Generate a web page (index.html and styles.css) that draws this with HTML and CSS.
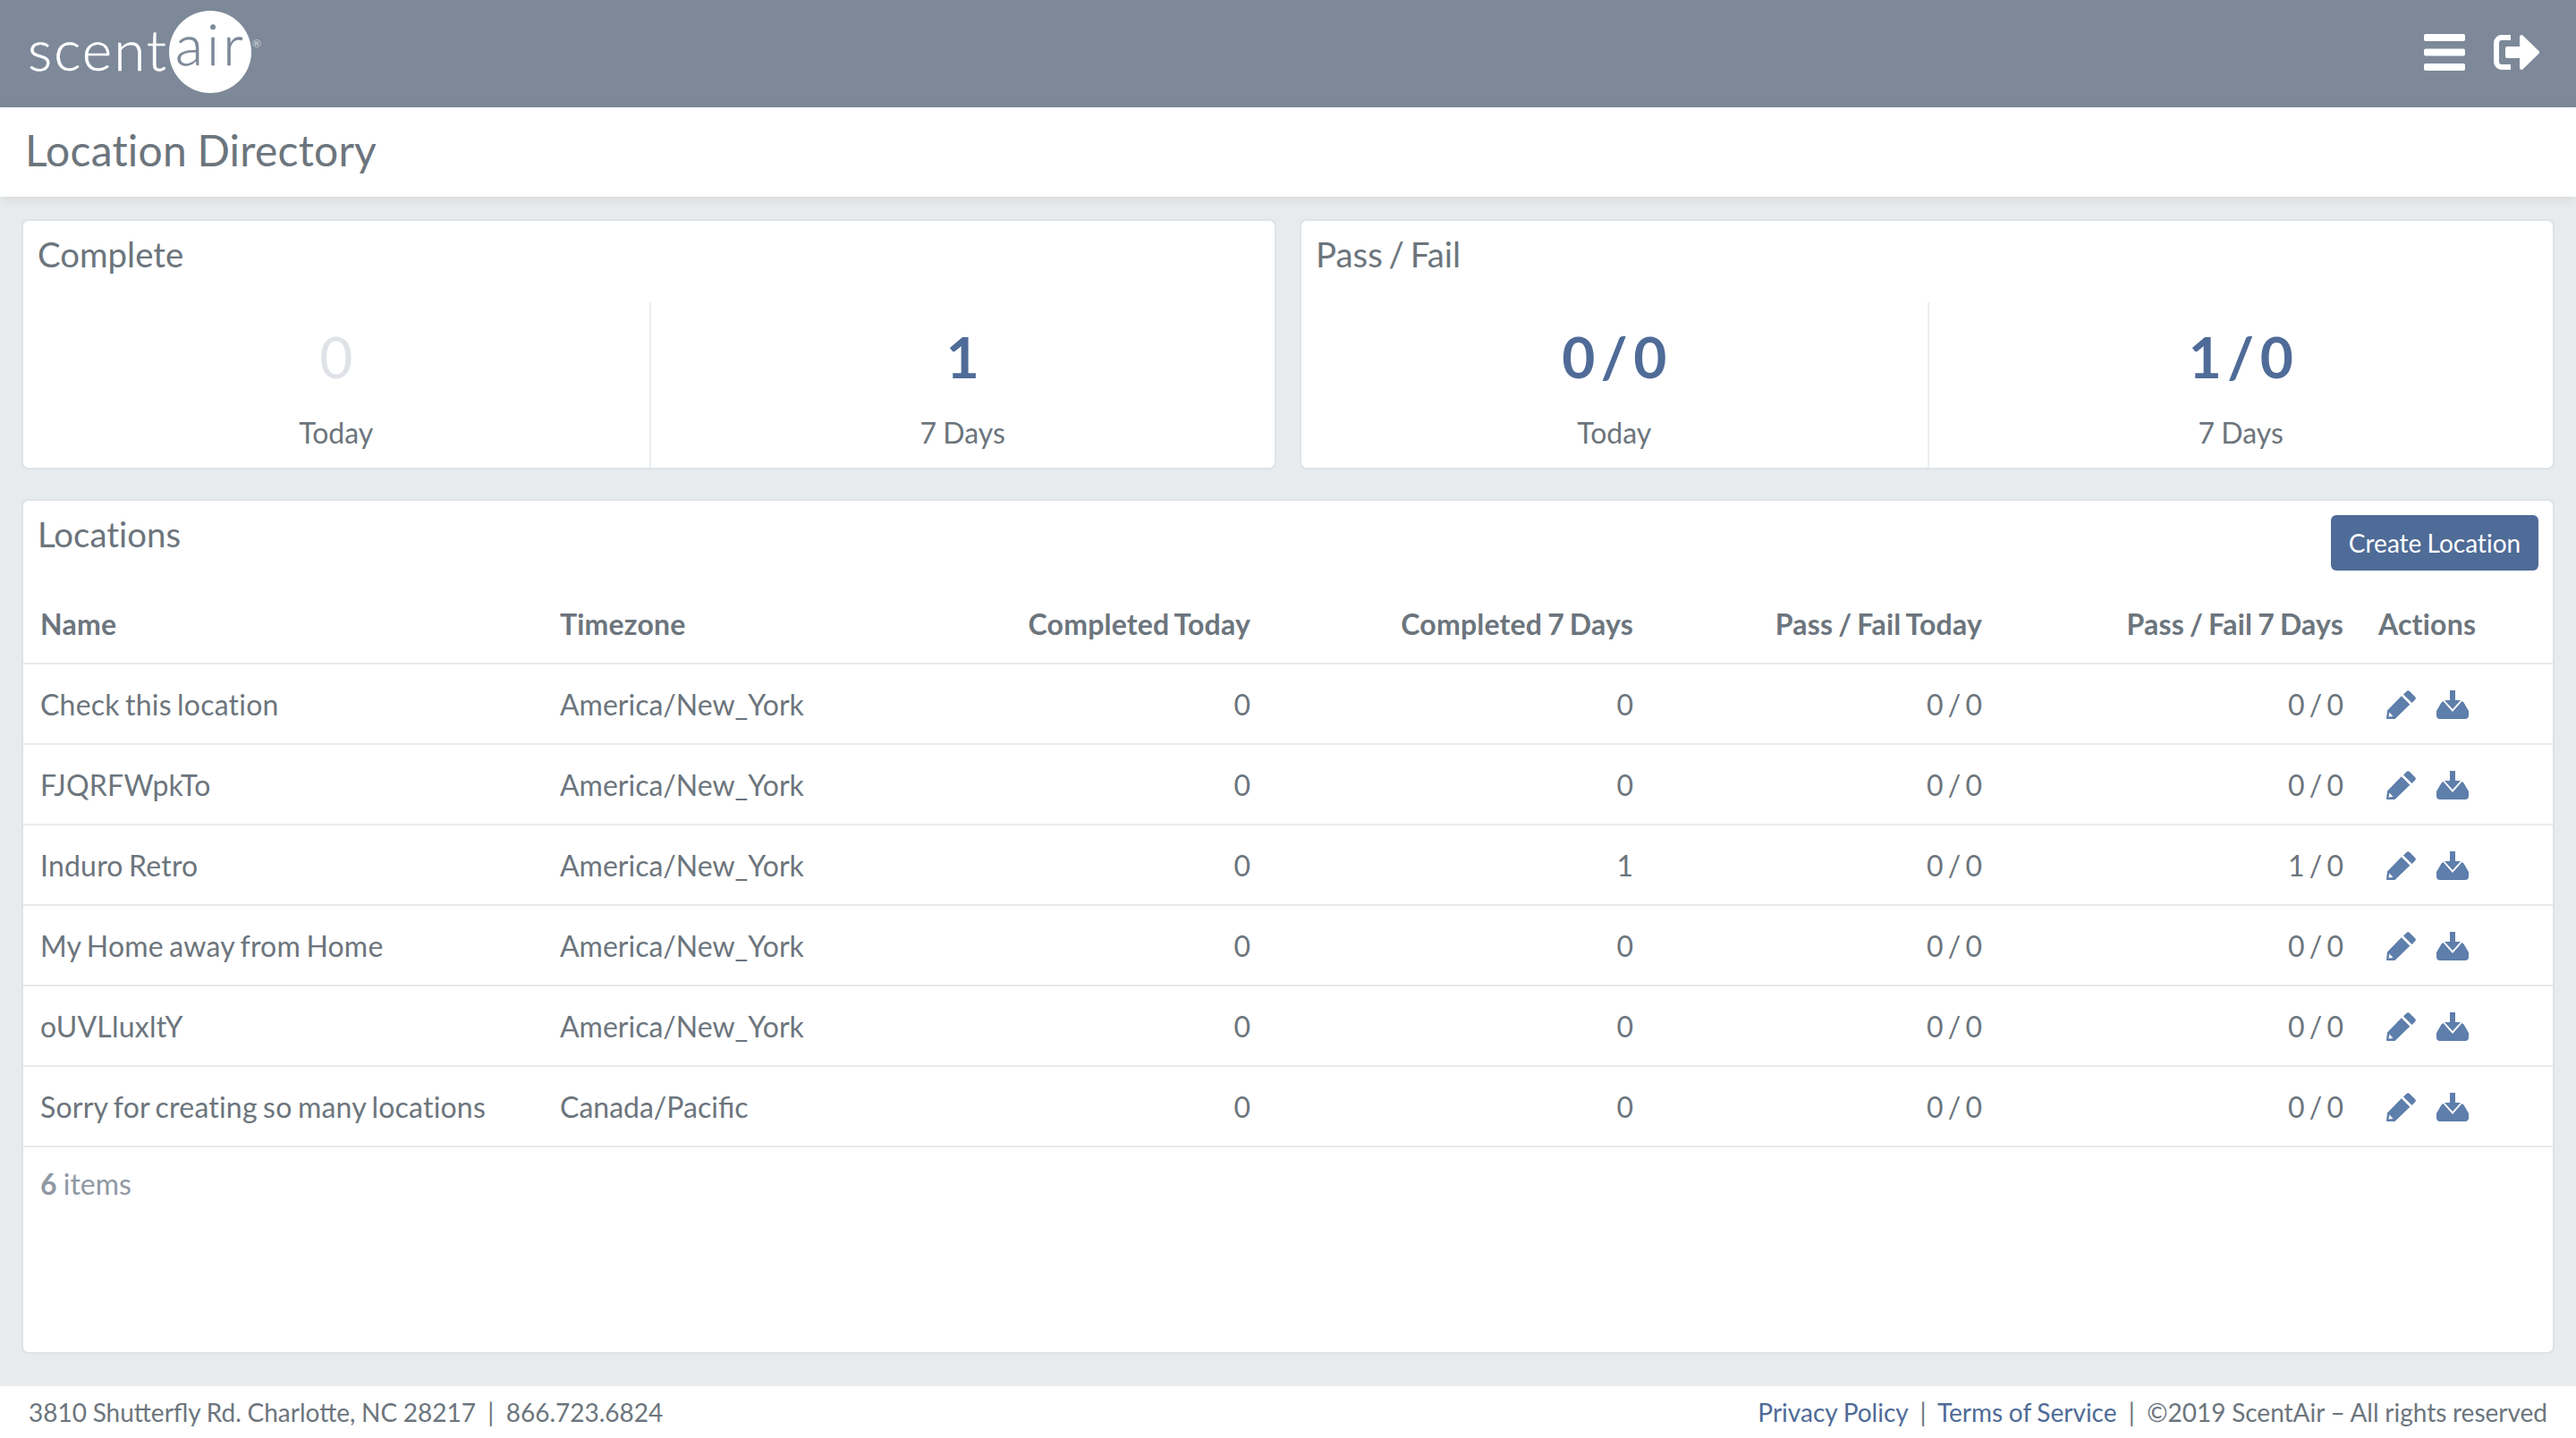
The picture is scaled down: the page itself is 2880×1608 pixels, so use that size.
FILE: index.html
```html
<!DOCTYPE html>
<html lang="en">
<head>
<meta charset="utf-8">
<title>Location Directory</title>
<link rel="stylesheet" href="styles.css">
</head>
<body>
<header class="topbar">
  <div class="logo">
    <span class="logo-scent">scent</span>
    <span class="logo-disc"><span class="logo-air">air</span></span>
    <span class="logo-reg">®</span>
  </div>
  <div class="top-icons">
    <svg class="ico-menu" viewBox="0 0 46 41"><rect x="0" y="0" width="46" height="8" rx="2"/><rect x="0" y="16.500" width="46" height="8" rx="2"/><rect x="0" y="33" width="46" height="8" rx="2"/></svg>
    <svg class="ico-exit" viewBox="0 0 51 39"><path d="M19 0v6H9a3 3 0 0 0-3 3v21a3 3 0 0 0 3 3h10v6H9a9 9 0 0 1-9-9V9a9 9 0 0 1 9-9z"/><path d="M29 2a2 2 0 0 1 3.400-1.400L50.400 18a2 2 0 0 1 0 3L32.400 38.400a2 2 0 0 1-3.400-1.400V26H15a2 2 0 0 1-2-2v-9a2 2 0 0 1 2-2h14z"/></svg>
  </div>
</header>
<div class="titlebar"><h1>Location Directory</h1></div>
<main class="content">
  <div class="stats">
    <section class="card stat-card">
      <h2>Complete</h2>
      <div class="stat-row">
        <div class="stat"><div class="num num-zero">0</div><div class="lbl">Today</div></div>
        <div class="stat"><div class="num">1</div><div class="lbl">7 Days</div></div>
      </div>
    </section>
    <section class="card stat-card">
      <h2>Pass / Fail</h2>
      <div class="stat-row">
        <div class="stat"><div class="num">0 / 0</div><div class="lbl">Today</div></div>
        <div class="stat"><div class="num">1 / 0</div><div class="lbl">7 Days</div></div>
      </div>
    </section>
  </div>
  <section class="card locations">
    <div class="loc-head">
      <h2>Locations</h2>
      <a class="btn">Create Location</a>
    </div>
    <table>
      <colgroup><col class="c1"><col class="c2"><col class="c3"><col class="c4"><col class="c5"><col class="c6"><col class="c7"></colgroup>
      <thead>
        <tr><th>Name</th><th>Timezone</th><th class="r">Completed Today</th><th class="r">Completed 7 Days</th><th class="r">Pass / Fail Today</th><th class="r">Pass / Fail 7 Days</th><th>Actions</th></tr>
      </thead>
      <tbody>
        <tr><td>Check this location</td><td>America/New_York</td><td class="r">0</td><td class="r">0</td><td class="r">0 / 0</td><td class="r">0 / 0</td><td class="acts"><svg class="i-edit" viewBox="0 0 33 32"><use href="#pen"/></svg><svg class="i-down" viewBox="0 0 36 32"><use href="#tray"/></svg></td></tr>
        <tr><td>FJQRFWpkTo</td><td>America/New_York</td><td class="r">0</td><td class="r">0</td><td class="r">0 / 0</td><td class="r">0 / 0</td><td class="acts"><svg class="i-edit" viewBox="0 0 33 32"><use href="#pen"/></svg><svg class="i-down" viewBox="0 0 36 32"><use href="#tray"/></svg></td></tr>
        <tr><td>Induro Retro</td><td>America/New_York</td><td class="r">0</td><td class="r">1</td><td class="r">0 / 0</td><td class="r">1 / 0</td><td class="acts"><svg class="i-edit" viewBox="0 0 33 32"><use href="#pen"/></svg><svg class="i-down" viewBox="0 0 36 32"><use href="#tray"/></svg></td></tr>
        <tr><td>My Home away from Home</td><td>America/New_York</td><td class="r">0</td><td class="r">0</td><td class="r">0 / 0</td><td class="r">0 / 0</td><td class="acts"><svg class="i-edit" viewBox="0 0 33 32"><use href="#pen"/></svg><svg class="i-down" viewBox="0 0 36 32"><use href="#tray"/></svg></td></tr>
        <tr><td>oUVLluxltY</td><td>America/New_York</td><td class="r">0</td><td class="r">0</td><td class="r">0 / 0</td><td class="r">0 / 0</td><td class="acts"><svg class="i-edit" viewBox="0 0 33 32"><use href="#pen"/></svg><svg class="i-down" viewBox="0 0 36 32"><use href="#tray"/></svg></td></tr>
        <tr><td>Sorry for creating so many locations</td><td class="lig">Canada/Pacific</td><td class="r">0</td><td class="r">0</td><td class="r">0 / 0</td><td class="r">0 / 0</td><td class="acts"><svg class="i-edit" viewBox="0 0 33 32"><use href="#pen"/></svg><svg class="i-down" viewBox="0 0 36 32"><use href="#tray"/></svg></td></tr>
      </tbody>
    </table>
    <div class="count"><b>6</b> items</div>
  </section>
</main>
<footer class="foot">
  <div class="lig">3810 Shutterfly Rd. Charlotte, NC 28217 &nbsp;|&nbsp; 866.723.6824</div>
  <div><a>Privacy Policy</a> &nbsp;|&nbsp; <a>Terms of Service</a> &nbsp;|&nbsp; ©2019 ScentAir – All rights reserved</div>
</footer>
<svg class="defs" aria-hidden="true">
  <defs>
    <path id="pen" fill-rule="evenodd" d="M22.500 1a2.500 2.500 0 0 1 3.500 0l6 6a2.500 2.500 0 0 1 0 3.500l-3.500 3.500-9.500-9.500zM16.800 6.200l9.500 9.500L9 32.500.9 32A1 1 0 0 1 0 31l1-8.500zM3.500 24.500l-1 5 5-.6z"/>
    <path id="tray" d="M15 0h6v11h6l-9 10-9-10h6zM7.500 12 18 24 28.500 12l2 1.500L36 23v5a4 4 0 0 1-4 4H4a4 4 0 0 1-4-4v-5l5.500-9.500z"/>
  </defs>
</svg>
</body>
</html>
```
FILE: styles.css
```css
* { box-sizing: border-box; }
html, body { margin: 0; height: 100%; }
body {
  width: 2880px; height: 1608px; background: #e8ebee; color: #6c757d;
  font-family: Lato, "Liberation Sans", sans-serif; font-size: 32px; word-spacing: -1px;
  font-variant-ligatures: none;
  display: flex; flex-direction: column; overflow: hidden;
}
.lig { font-variant-ligatures: common-ligatures; }
.defs { width: 0; height: 0; position: absolute; }
.topbar {
  height: 120px; background: #7d8999; flex: none;
  display: flex; justify-content: space-between; align-items: center;
  padding: 0 41px 3px 31px; color: #fff;
}
.logo { align-self: flex-start; height: 120px; position: relative; width: 270px; }
.logo-scent { position: absolute; left: 0; top: 23px; font: 300 64px/64px Lato, sans-serif; letter-spacing: 2px; -webkit-text-stroke: .5px #fff; }
.logo-disc {
  position: absolute; left: 158px; top: 12px; width: 92px; height: 92px; border-radius: 50%;
  background: #fff; color: #7d8999; display: flex; justify-content: center;
}
.logo-air { font: 300 64px/74px Lato, sans-serif; letter-spacing: 4px; margin-left: 2px; -webkit-text-stroke: .5px #7d8999; }
.logo-reg { position: absolute; left: 251px; top: 41px; font-size: 12px; line-height: 16px; color: #d7dce2; }
.top-icons { display: flex; align-items: center; gap: 32px; }
.ico-menu { width: 46px; height: 41px; fill: #fff; }
.ico-exit { width: 51px; height: 39px; fill: #fff; }
.titlebar {
  height: 100px; background: #fff; flex: none; padding: 0 0 4px 28px;
  display: flex; align-items: center; box-shadow: 0 3px 12px rgba(0,0,0,.08);
  position: relative;
}
h1 { margin: 0; font-size: 48px; font-weight: 400; line-height: 1; color: #6c757d; word-spacing: -1px; letter-spacing: .2px; }
h2 { margin: 0; font-size: 38.400px; font-weight: 400; line-height: 46px; color: #6c757d; word-spacing: -3px; }
.content { flex: 1; padding: 25px 24px 36px; display: flex; flex-direction: column; gap: 33px; min-height: 0; }
.stats { display: grid; grid-template-columns: 1fr 1fr; gap: 26px; }
.card { background: #fff; border: 2px solid #dfe2e5; border-radius: 8px; }
.stat-card { height: 280px; padding-top: 14px; display: flex; flex-direction: column; }
.stat-card h2 { padding-left: 16px; }
.stat-row { display: grid; grid-template-columns: 1fr 1fr; margin-top: 31px; flex: 1; }
.stat { text-align: center; padding-top: 25px; }
.stat + .stat { border-left: 2px solid #eceef0; }
.num { font-size: 64px; font-weight: 700; line-height: 72px; color: #4f6b97; word-spacing: -9px; }
.num-zero { color: #dfe2e7; font-weight: 400; }
.lbl { margin-top: 29px; line-height: 40px; }
.locations { flex: 1; padding-top: 14px; min-height: 0; }
.loc-head { display: flex; justify-content: space-between; align-items: flex-start; padding: 0 16px; height: 77px; }
.btn {
  background: #4f6b97; color: #fff; border-radius: 6px; height: 62px; width: 232px; margin-top: 2px;
  display: flex; align-items: center; justify-content: center; font-size: 28px;
}
table { width: 100%; border-collapse: collapse; table-layout: fixed; }
.c1 { width: 579px; } .c2 { width: 300px; } .c3 { width: 513px; } .c4 { width: 428px; }
.c5 { width: 390px; } .c6 { width: 404px; } .c7 { width: auto; }
th, td { padding: 0 0 0 21px; text-align: left; height: 90px; border-bottom: 2px solid #e8ebee; white-space: nowrap; }
td:first-child { letter-spacing: .2px; word-spacing: -2px; padding-left: 19px; }
th { font-weight: 700; height: 91px; padding-top: 2px; letter-spacing: .2px; word-spacing: -2px; }
th:first-child { padding-left: 19px; }
th:last-child { padding-left: 19px; }
th.r, td.r { text-align: right; padding: 0 20px 0 0; }
th.r { padding-top: 2px; }
td.r { word-spacing: -3px; }
td.acts { padding-left: 28px; }
.acts svg { fill: #5e7eab; vertical-align: middle; display: inline-block; margin-bottom: 4px; }
.i-edit { width: 33px; height: 32px; margin-right: 23px; }
.i-down { width: 36px; height: 32px; }
.count { padding: 21px 19px; line-height: 40px; color: #8f98a3; }
.count b { font-weight: 700; }
.foot {
  height: 58px; background: #fff; flex: none; display: flex; justify-content: space-between;
  align-items: center; padding: 0 32px; font-size: 28px; white-space: nowrap; word-spacing: -.5px;
}
.foot a { color: #4f6b97; }
```
